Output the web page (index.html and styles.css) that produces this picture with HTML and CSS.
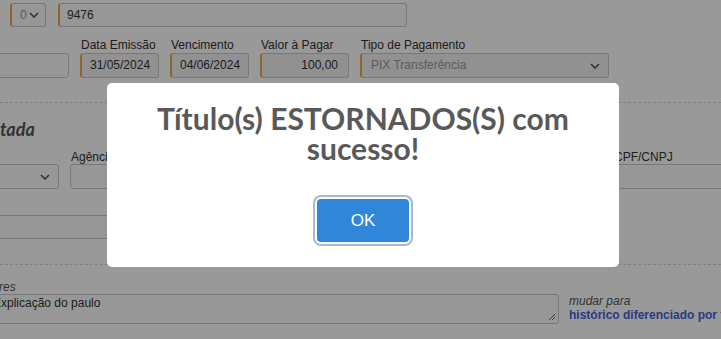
FILE: index.html
```html
<!DOCTYPE html>
<html lang="pt-BR">
<head>
<meta charset="utf-8">
<title>Título estornado</title>
<link rel="stylesheet" href="styles.css">
</head>
<body>
<div class="page">
  <div class="row row-top">
    <div class="select sel-small mark"><span>0</span><svg class="chev" viewBox="0 0 10 6"><path d="M1 1l4 4 4-4" fill="none" stroke="#555" stroke-width="1.6"/></svg></div>
    <div class="input mark inp-num">9476</div>
  </div>

  <div class="row row-fields">
    <div class="field f0"><label>&nbsp;</label><div class="input"></div></div>
    <div class="field f1"><label>Data Emissão</label><div class="input mark ro">31/05/2024</div></div>
    <div class="field f2"><label>Vencimento</label><div class="input mark ro">04/06/2024</div></div>
    <div class="field f3"><label>Valor à Pagar</label><div class="input mark ro right">100,00</div></div>
    <div class="field f4"><label>Tipo de Pagamento</label><div class="select mark ro muted"><span>PIX Transferência</span><svg class="chev" viewBox="0 0 10 6"><path d="M1 1l4 4 4-4" fill="none" stroke="#555" stroke-width="1.6"/></svg></div></div>
  </div>

  <hr class="dash dash1">

  <h3 class="section">Conta Depositada</h3>

  <div class="row row-bank">
    <div class="field b0"><label>&nbsp;</label><div class="select"><span></span><svg class="chev" viewBox="0 0 10 6"><path d="M1 1l4 4 4-4" fill="none" stroke="#555" stroke-width="1.6"/></svg></div></div>
    <div class="field b1"><label>Agência</label><div class="input"></div></div>
    <div class="field b2"><label>Conta</label><div class="input"></div></div>
    <div class="field b3"><label>CPF/CNPJ</label><div class="input"></div></div>
  </div>

  <div class="row row-extra">
    <div class="input wide"></div>
  </div>

  <hr class="dash dash2">

  <div class="row row-obs">
    <div class="obs">
      <label class="it">Informações Complementares</label>
      <div class="textarea">Explicação do paulo<svg class="grip" viewBox="0 0 8 8"><path d="M7 1L1 7M7 4L4 7" stroke="#666" stroke-width="1"/></svg></div>
    </div>
    <div class="hint">
      <div class="it">mudar para</div>
      <a class="link">histórico diferenciado por fornecedor</a>
    </div>
  </div>
</div>

<div class="overlay">
  <div class="modal" role="dialog">
    <h2 class="title">Título(s) ESTORNADOS(S) com sucesso!</h2>
    <div class="actions"><button class="ok">OK</button></div>
  </div>
</div>
</body>
</html>
```

FILE: styles.css
```css
* { box-sizing: border-box; }
html, body { margin: 0; padding: 0; }
body {
  width: 721px; height: 339px; overflow: hidden;
  background: #fff;
  font-family: "Liberation Sans", Arial, sans-serif;
  font-size: 12px; color: #333;
}
.page { width: 721px; overflow: hidden; }
.row { display: flex; gap: 11px; }
.row > * { flex: none; }
.row-top { padding-top: 3px; gap: 12px; }
.input, .select {
  height: 24px; border: 1px solid #c8c8c8; border-radius: 3px;
  background: #fcfcfc; padding: 0 10px; line-height: 22px;
  font-size: 12px; color: #333; white-space: nowrap; overflow: hidden;
}
.mark { border-left: 2px solid #f0a848; }
.ro { background: #f2f2f2; }
.right { text-align: right; }
.muted { color: #999; }
.select { display: flex; align-items: center; justify-content: space-between; padding: 0 8px 0 9px; }
.chev { width: 10px; height: 6px; flex: none; }
.sel-small { width: 36px; margin-left: 10px; color: #999; padding: 0 6px 0 8px; }
.inp-num { width: 349px; padding-left: 7px; }
.row-fields { margin-top: 11px; }
.field label { display: block; height: 15px; line-height: 14px; margin-bottom: 0; font-size: 12px; color: #333; padding-left: 1px; white-space: nowrap; }
.field .input, .field .select { height: 25px; line-height: 23px; }
.f0 { width: 100px; margin-left: -31px; }
.f1, .f2 { width: 79px; }
.f3 { width: 89px; }
.f4 { width: 249px; }
.f1 .input, .f2 .input { padding-left: 8px; }
.dash { border: 0; border-top: 1px dashed #d8d8d8; margin: 0; }
.dash1 { margin-top: 24px; }
.section {
  margin: 15px 0 0 -102px; font-family: Lato, sans-serif; font-style: italic;
  font-weight: 700; font-size: 18px; line-height: 22px; color: #555; white-space: nowrap;
}
.row-bank { margin-top: 10px; }
.row-bank .field label { height: 14px; }
.row-bank .field .input, .row-bank .field .select { height: 25px; }
.b0 { width: 100px; margin-left: -41px; }
.b1 { width: 250px; }
.b2 { width: 271px; }
.b3 { width: 200px; }
.b3 .input { border-radius: 0; }
.row-extra { margin-top: 26px; }
.wide { width: 300px; margin-left: -10px; }
.dash2 { margin-top: 25px; }
.row-obs { margin-top: 15px; gap: 10px; align-items: flex-start; }
.obs { margin-left: -14px; width: 573px; }
.it { font-style: italic; color: #555; font-size: 12px; }
.obs label { display: block; height: 14px; line-height: 14px; margin-left: -131px; white-space: nowrap; }
.textarea {
  position: relative; height: 30px; border: 1px solid #c8c8c8; border-radius: 3px;
  background: #fcfcfc; padding: 1px 6px; line-height: 14px; color: #333;
}
.grip { position: absolute; right: 2px; bottom: 2px; width: 8px; height: 8px; }
.hint { padding-top: 14px; white-space: nowrap; line-height: 14px; }
.link { display: block; color: #4a60dc; font-weight: 700; font-size: 12px; }

.overlay {
  position: fixed; inset: 0; background: rgba(0, 0, 0, 0.4);
  display: flex; align-items: center; justify-content: center;
  padding: 11px 0 0 5px;
}
.modal {
  width: 512px; height: 184px; background: #fff; border-radius: 5px;
  padding: 20px 20px; display: flex; flex-direction: column; align-items: center;
}
.title {
  margin: 0; font-family: Lato, "Open Sans", sans-serif; font-weight: 700;
  font-size: 30px; line-height: 30px; color: #595959; text-align: center;
  padding: 0 20px;
}
.actions { margin-top: 36px; }
.ok {
  width: 92px; height: 43px; border: 0; border-radius: 4px;
  background: #3086d8; color: #fff; font-family: "Liberation Sans", Arial, sans-serif;
  font-size: 17px; box-shadow: 0 0 0 2px #fff, 0 0 0 4px #a7bbd0;
}
```
